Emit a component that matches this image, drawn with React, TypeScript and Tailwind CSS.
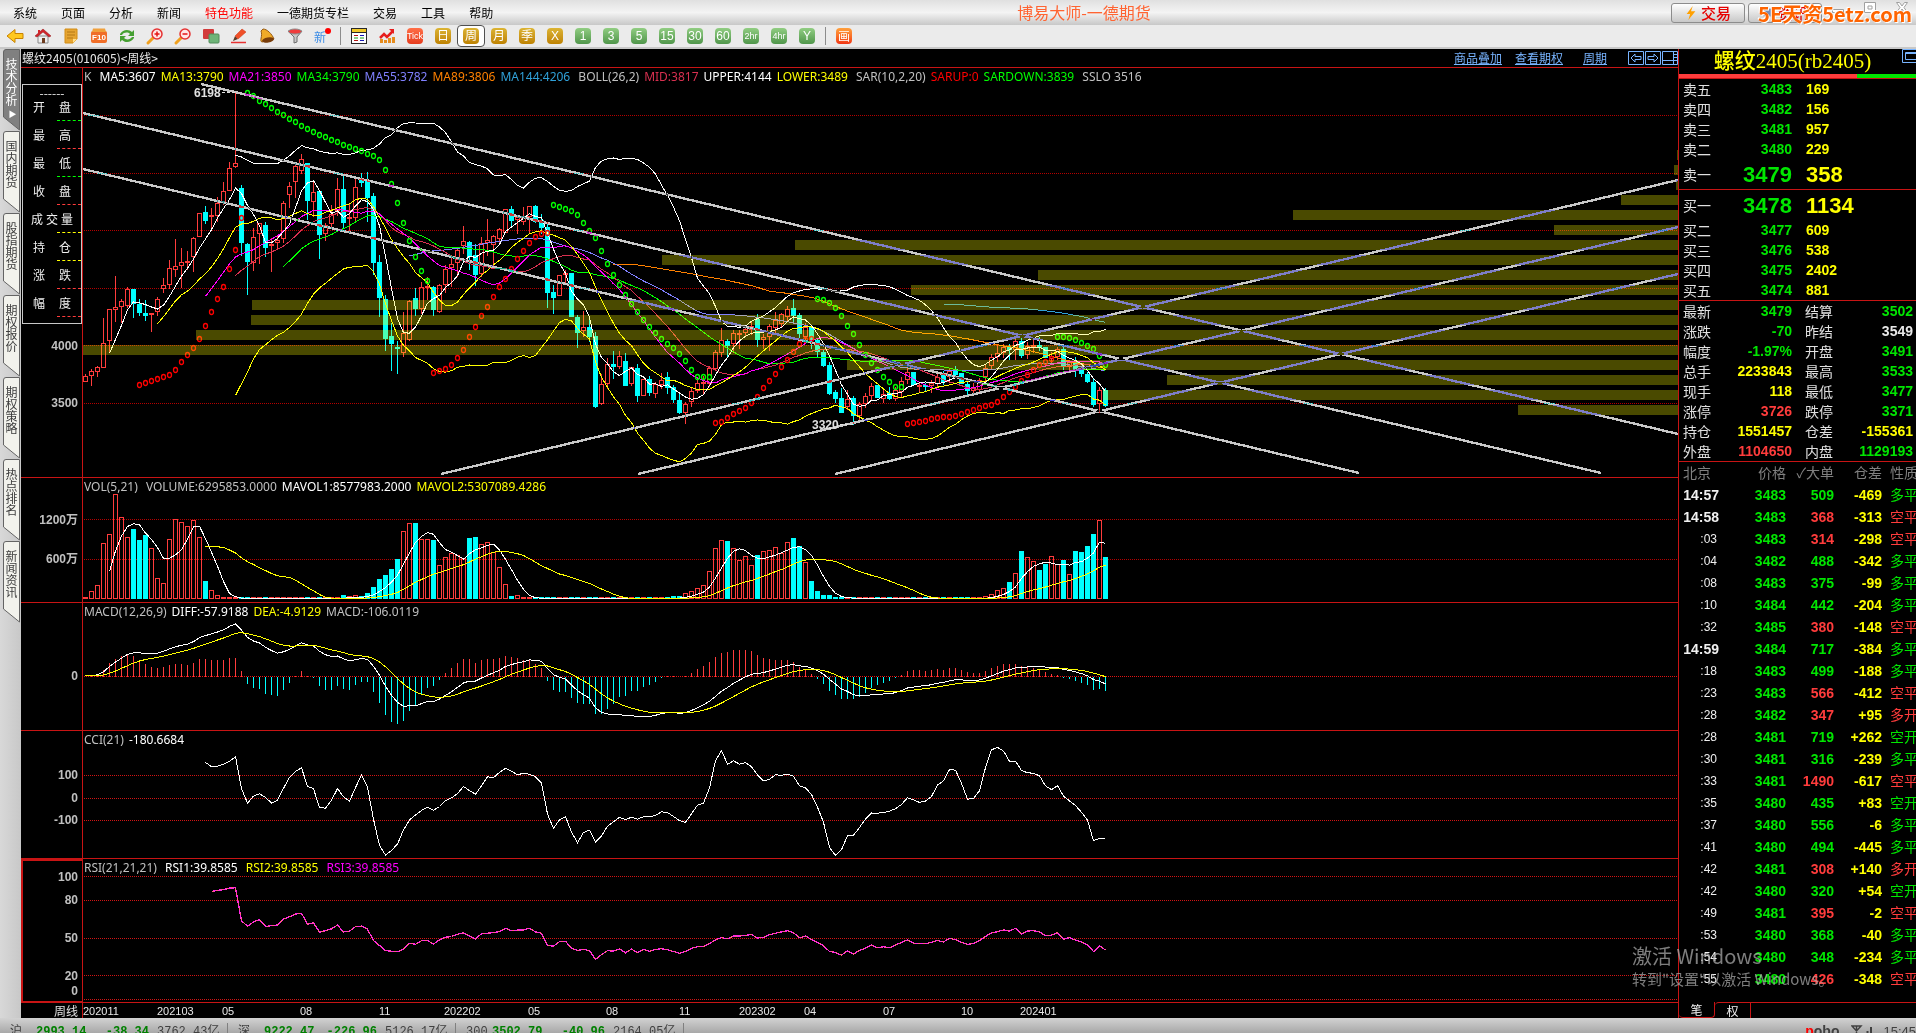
import { ReactNode } from 'react';
import clsx from 'clsx';

// high, body top, body bottom, low, direction (1 = up, 0 = down), in chart units
type Candle = [number, number, number, number, number];

const candles: Candle[] = [
  [374, 376, 382, 382, 1], [369, 371, 376, 386, 1], [366, 367, 372, 377, 1], [318, 343, 368, 368, 1],
  [309, 309, 341, 353, 1], [276, 307, 310, 322, 1], [299, 301, 307, 323, 1], [287, 289, 306, 308, 1],
  [289, 289, 304, 318, 0], [299, 304, 313, 316, 0], [300, 313, 316, 321, 0], [313, 313, 315, 332, 1],
  [297, 299, 312, 316, 1], [278, 285, 289, 293, 1], [260, 268, 285, 289, 1], [239, 266, 270, 277, 1],
  [248, 262, 266, 288, 1], [251, 261, 262, 270, 1], [237, 238, 257, 272, 1], [213, 213, 237, 237, 1],
  [206, 212, 221, 224, 0], [208, 215, 217, 230, 1], [197, 203, 216, 222, 1], [182, 191, 202, 205, 1],
  [162, 168, 191, 191, 1], [93, 163, 167, 168, 1], [185, 188, 243, 256, 0], [243, 244, 262, 295, 0],
  [228, 237, 263, 271, 1], [223, 223, 234, 264, 1], [222, 225, 248, 257, 0], [238, 244, 246, 272, 1],
  [235, 240, 243, 249, 1], [201, 203, 239, 243, 1], [182, 186, 195, 208, 1], [163, 166, 182, 198, 1],
  [154, 159, 171, 174, 1], [163, 163, 201, 220, 0], [180, 192, 202, 217, 1], [191, 191, 235, 259, 0],
  [223, 225, 234, 241, 1], [205, 214, 224, 229, 1], [178, 189, 211, 216, 1], [176, 189, 223, 228, 0],
  [204, 217, 219, 233, 1], [179, 187, 218, 223, 1], [173, 179, 183, 187, 0], [172, 181, 198, 222, 0],
  [193, 196, 263, 275, 0], [255, 262, 298, 317, 0], [295, 299, 339, 351, 0], [323, 336, 344, 371, 0],
  [341, 347, 349, 374, 0], [312, 333, 353, 357, 1], [300, 301, 340, 341, 1], [288, 298, 309, 316, 0],
  [282, 287, 309, 314, 1], [277, 286, 288, 300, 1], [286, 287, 310, 316, 0], [284, 285, 312, 313, 1],
  [265, 269, 285, 293, 1], [255, 264, 268, 287, 1], [247, 250, 263, 277, 1], [226, 241, 246, 254, 1],
  [241, 242, 257, 270, 0], [244, 255, 275, 286, 0], [237, 243, 274, 277, 1], [219, 240, 243, 256, 1],
  [235, 236, 245, 266, 1], [228, 229, 239, 245, 1], [209, 209, 233, 233, 1], [206, 209, 221, 226, 0],
  [215, 217, 220, 234, 1], [207, 216, 222, 225, 1], [206, 206, 217, 233, 1], [205, 206, 222, 223, 0],
  [214, 220, 228, 234, 0], [222, 227, 293, 308, 0], [285, 292, 298, 314, 0], [275, 275, 296, 296, 1],
  [270, 273, 275, 283, 1], [273, 273, 317, 317, 0], [315, 317, 333, 348, 0], [311, 327, 331, 337, 1],
  [317, 327, 337, 342, 0], [332, 336, 407, 408, 0], [374, 384, 404, 405, 1], [358, 364, 384, 389, 1],
  [351, 364, 367, 379, 0], [351, 356, 367, 369, 1], [353, 361, 386, 386, 0], [367, 367, 384, 386, 1],
  [364, 368, 396, 402, 0], [379, 379, 396, 396, 1], [376, 379, 393, 396, 0], [382, 384, 394, 398, 1],
  [373, 380, 385, 389, 1], [372, 377, 388, 394, 0], [385, 387, 400, 403, 0], [393, 400, 413, 414, 0],
  [402, 404, 413, 424, 1], [387, 391, 402, 407, 1], [378, 383, 391, 393, 1], [376, 382, 384, 394, 1],
  [366, 368, 384, 387, 1], [350, 352, 369, 370, 1], [328, 340, 353, 357, 1], [339, 341, 346, 358, 0],
  [330, 333, 344, 353, 1], [330, 333, 335, 349, 1], [325, 329, 333, 337, 1], [322, 326, 330, 335, 1],
  [314, 319, 340, 347, 0], [334, 337, 340, 349, 1], [324, 326, 337, 351, 1], [312, 320, 328, 333, 1],
  [313, 314, 324, 328, 1], [306, 309, 317, 322, 1], [299, 308, 316, 324, 0], [313, 315, 334, 340, 0],
  [323, 327, 337, 343, 1], [325, 327, 340, 349, 0], [339, 340, 352, 357, 0], [350, 352, 366, 367, 0],
  [362, 365, 394, 395, 0], [390, 392, 399, 403, 0], [388, 398, 413, 413, 0], [390, 399, 407, 410, 1],
  [396, 398, 416, 425, 0], [402, 404, 416, 420, 1], [393, 396, 404, 408, 1], [383, 386, 396, 400, 1],
  [385, 385, 398, 398, 0], [390, 394, 399, 403, 1], [387, 393, 399, 400, 0], [387, 390, 399, 401, 1],
  [377, 381, 392, 397, 1], [366, 372, 380, 384, 1], [372, 372, 385, 385, 0], [383, 385, 386, 393, 1],
  [383, 385, 387, 392, 0], [380, 383, 386, 393, 1], [374, 377, 384, 387, 1], [371, 374, 382, 385, 0],
  [368, 371, 377, 383, 1], [366, 369, 375, 378, 0], [373, 373, 384, 384, 0], [382, 384, 391, 395, 0],
  [383, 388, 391, 394, 1], [378, 380, 390, 392, 1], [365, 368, 377, 382, 1], [354, 357, 366, 369, 1],
  [344, 353, 357, 362, 1], [344, 347, 353, 358, 1], [344, 347, 350, 360, 0], [339, 341, 350, 360, 1],
  [338, 341, 356, 358, 0], [342, 346, 355, 359, 1], [340, 345, 347, 353, 1], [337, 345, 348, 351, 0],
  [347, 347, 358, 358, 0], [352, 356, 359, 363, 1], [347, 349, 357, 360, 1], [347, 349, 366, 370, 0],
  [360, 362, 367, 371, 1], [357, 361, 369, 377, 0], [368, 369, 374, 377, 0], [372, 374, 382, 383, 0],
  [379, 382, 405, 407, 0], [387, 390, 404, 413, 1], [388, 390, 406, 407, 0],
];

const volumes: number[] = [
  1, 7, 13, 55, 64, 104, 81, 61, 69, 58, 63, 50, 20, 15, 59, 79, 76, 72, 78, 61, 17, 8, 3, 1,
  ...Array(19).fill(1),
  3, 2, 3, 2, 5, 11, 19, 23, 29, 39, 67, 75, 75, 59, 59, 58, 33, 41, 45, 43, 40, 60, 61, 54, 56, 46, 31, 14, 2, 3, 1,
  ...Array(24).fill(1),
  2, 2, 5, 7, 10, 13, 27, 50, 58, 57, 50, 38, 42, 33, 43, 47, 48, 51, 45, 56, 60, 52, 36, 17, 7, 3, 3,
  ...Array(25).fill(1),
  2, 4, 8, 10, 16, 25, 47, 41, 37, 28, 34, 42, 34, 38, 24, 47, 46, 52, 64, 78, 41,
];

const sar = [
  { start: 9, color: '#ff0000', ys: [385, 383, 381, 379, 377, 375, 370, 362, 355, 348, 339, 326, 312, 299, 287, 269, 250, 218] },
  { start: 27, color: '#00ff00', ys: [93, 96, 101, 104, 108, 112, 115, 119, 122, 126, 129, 132, 135, 137, 140, 142, 145, 147, 149, 151, 154, 156, 160, 170, 184, 203, 223, 241, 257, 271, 281] },
  { start: 58, color: '#ff0000', ys: [373, 371, 369, 365, 358, 350, 337, 327, 316, 307, 297, 287, 279, 269, 259, 251, 243, 237, 234, 233] },
  { start: 78, color: '#00ff00', ys: [205, 207, 209, 211, 215, 223, 231, 238, 251, 264, 275, 285, 295, 304, 312, 320, 327, 333, 339, 344, 348, 354, 361, 370, 377, 377, 377] },
  { start: 105, color: '#ff0000', ys: [423, 422, 418, 414, 411, 408, 403, 397, 388, 381, 374, 367, 360, 352, 344, 340, 339] },
  { start: 122, color: '#00ff00', ys: [299, 300, 303, 308, 316, 326, 334, 345, 355, 363, 370, 377, 382, 387, 387] },
  { start: 137, color: '#ff0000', ys: [424, 423, 422, 421, 419, 418, 417, 417, 416, 414, 412, 410, 408, 406, 405, 402, 397, 392, 387, 381, 375, 370, 365, 362, 359] },
  { start: 162, color: '#00ff00', ys: [337, 337, 338, 340, 343, 346, 349, 356, 365] },
];

// volume profile, one bar each 15 units from y = 150
const profile = [1677, 1674, 1676, 1621, 1293, 1554, 795, 662, 1038, 911, 252, 251, 196, 83, 847, 1167, 1103, 1518];

const trendLines = [
  [201, 84, 1678, 434],
  [83, 113, 1601, 473],
  [83, 169, 1359, 473],
  [441, 474, 1678, 180],
  [638, 474, 1678, 227],
  [835, 474, 1678, 274],
];

const xAt = (i: number) => 85.5 + i * 6;
const closes = candles.map((c) => (c[4] ? c[1] : c[2]));
const prices = closes.map((c) => -c);

const average = (values: number[]) => values.reduce((a, b) => a + b, 0) / values.length;

const rolling = (values: number[], n: number, fn: (w: number[]) => number) =>
  values.map((_, i) => (i < n - 1 ? NaN : fn(values.slice(i - n + 1, i + 1))));

const ema = (values: number[], n: number) => {
  let prev = values[0];
  return values.map((v) => (prev = prev + ((v - prev) * 2) / (n + 1)));
};

const deviation = (w: number[]) => {
  const m = average(w);
  return Math.sqrt(w.reduce((a, b) => a + (b - m) ** 2, 0) / (w.length - 1));
};

const mid = rolling(closes, 26, average);
const dev = rolling(closes, 26, deviation);

const fast = ema(prices, 12);
const slow = ema(prices, 26);
const diff = fast.map((v, i) => v - slow[i]);
const dea = ema(diff, 9);

const cci = rolling(candles.map((c, i) => -(c[0] + c[3] + closes[i]) / 3), 21, (w) => {
  const m = average(w);
  return (w[w.length - 1] - m) / (0.015 * average(w.map((v) => Math.abs(v - m))));
});

const rsi = (() => {
  let gain = 0;
  let move = 0;
  return prices.map((p, i) => {
    if (i === 0) return NaN;
    const d = p - prices[i - 1];
    // the first bar seeds both averages
    gain = i === 1 ? Math.max(d, 0) : (gain * 20 + Math.max(d, 0)) / 21;
    move = i === 1 ? Math.abs(d) : (move * 20 + Math.abs(d)) / 21;
    return i < 21 ? NaN : (gain / move) * 100;
  });
})();

const Curve = ({ values, color, width = 1, dash }: { values: number[]; color: string; width?: number; dash?: string }) => (
  <polyline
    fill="none"
    stroke={color}
    strokeWidth={width}
    strokeDasharray={dash}
    points={values
      .map((v, i) => (Number.isNaN(v) ? '' : `${xAt(i)},${v.toFixed(1)}`))
      .filter(Boolean)
      .join(' ')}
  />
);

const GridLines = ({ ys, color = '#b40000' }: { ys: number[]; color?: string }) => (
  <>
    {ys.map((y) => (
      <line key={y} x1="84" x2="1678" y1={y + 0.5} y2={y + 0.5} stroke={color} strokeDasharray="1 1" />
    ))}
  </>
);

type Label = { y: number; text: string };

type PaneProps = {
  top: number;
  height: number;
  labels: Label[];
  legend: [string, string][];
  active?: boolean;
  aside?: ReactNode;
  children: ReactNode;
};

const Pane = ({ top, height, labels, legend, active, aside, children }: PaneProps) => (
  <section className="grid min-h-0 grid-cols-[62px_minmax(0,1fr)] border-b border-[#c81414]">
    <div className={clsx('relative min-h-0 border-r border-[#c81414]', active && 'border-2 border-b')}>
      <svg
        viewBox={`21 ${top} 61 ${height}`}
        preserveAspectRatio="none"
        className={clsx('absolute w-[61px]', active ? '-top-[2px] -left-[2px] h-[calc(100%+3px)]' : 'top-0 left-0 h-full')}
      >
        {labels.map((l) => (
          <text key={l.text} x="78" y={l.y + 4} textAnchor="end" fill="#c0c0c0" className="font-['Liberation_Sans','Noto_Sans_CJK_SC',sans-serif] text-[12px] font-bold">
            {l.text}
          </text>
        ))}
      </svg>
      {aside}
    </div>
    <div className="relative min-h-0 overflow-hidden">
      <svg viewBox={`83 ${top} 1595 ${height}`} preserveAspectRatio="none" shapeRendering="crispEdges" className="absolute inset-0 h-full w-full">
        {children}
      </svg>
      <div className="absolute top-px left-px flex gap-[5px] font-['Noto_Sans',sans-serif] text-[12px] leading-4 whitespace-pre">
        {legend.map(([text, color]) => (
          <span key={text} style={{ color }}>{text}</span>
        ))}
      </div>
    </div>
  </section>
);

const quoteFields = [
  ['开盘', 'text-[#00ff00]'],
  ['最高', 'text-[#ff3c3c]'],
  ['最低', 'text-[#00ff00]'],
  ['收盘', 'text-[#ff3c3c]'],
  ['成交量', 'text-[#ffff00]'],
  ['持仓', 'text-[#ffff00]'],
  ['涨跌', 'text-[#ff3c3c]'],
  ['幅度', 'text-[#ff3c3c]'],
];

const CursorBox = () => (
  <div className="absolute top-4 left-px w-[60px] border border-[#c8c8c8] bg-black text-[12px] text-[#f0f0f0]">
    <div className="h-[14px] text-center leading-4">------</div>
    {quoteFields.map(([name, color]) => (
      <div key={name} className="h-7">
        <div className={clsx('flex h-4 justify-between leading-4', name.length > 2 ? 'px-2' : 'px-[10px]')}>
          {name.split('').map((c) => <span key={c}>{c}</span>)}
        </div>
        <div className={clsx('ml-auto mt-[5px] w-6 border-t border-dashed border-current', color)} />
      </div>
    ))}
  </div>
);

const PricePane = () => (
  <Pane
    top={68}
    height={409}
    labels={[{ y: 346, text: '4000' }, { y: 403, text: '3500' }]}
    legend={[
      ['K ', '#c0c0c0'], ['MA5:3607', '#ffffff'], ['MA13:3790', '#ffff00'], ['MA21:3850', '#ff00ff'],
      ['MA34:3790', '#00ff00'], ['MA55:3782', '#8080ff'], ['MA89:3806', '#ff8000'], ['MA144:4206 ', '#30a0d8'],
      ['BOLL(26,2)', '#c0c0c0'], ['MID:3817', '#d83050'], ['UPPER:4144', '#ffffff'], ['LOWER:3489 ', '#ffff00'],
      ['SAR(10,2,20)', '#c0c0c0'], ['SARUP:0', '#ff0000'], ['SARDOWN:3839 ', '#00ff00'], ['SSLO 3516', '#c0c0c0'],
    ]}
    aside={<CursorBox />}
  >
    <GridLines ys={[115, 173, 230, 288, 345, 403]} />
    {candles.map(([high, top, bottom, low, up], i) => {
      const x = xAt(i);
      return up ? (
        <g key={i} stroke="#ff3c3c" fill="none">
          <path d={`M${x} ${high}V${top}M${x} ${bottom}V${low}`} />
          <rect x={x - 2} y={top + 0.5} width="4" height={Math.max(bottom - top - 1, 1)} />
        </g>
      ) : (
        <g key={i}>
          <line x1={x} x2={x} y1={high} y2={low} stroke="#00ffff" />
          <rect x={x - 2.5} y={top} width="5" height={bottom - top} fill="#00ffff" />
        </g>
      );
    })}
    <Curve values={rolling(closes, 144, average)} color="#30a0d8" />
    <Curve values={rolling(closes, 89, average)} color="#ff8000" />
    <Curve values={rolling(closes, 55, average)} color="#8080ff" />
    <Curve values={rolling(closes, 34, average)} color="#00ff00" />
    <Curve values={mid} color="#d83050" />
    <Curve values={rolling(closes, 21, average)} color="#ff00ff" />
    <Curve values={rolling(closes, 13, average)} color="#ffff00" />
    <Curve values={rolling(closes, 5, average)} color="#ffffff" />
    <Curve values={mid.map((m, i) => m - 2 * dev[i])} color="#ffffff" />
    <Curve values={mid.map((m, i) => m + 2 * dev[i])} color="#ffff00" />
    {sar.map((run) =>
      run.ys.map((y, i) => (
        <ellipse key={`${run.start}-${i}`} cx={xAt(run.start + i)} cy={y} rx="2" ry="2.5" fill="none" stroke={run.color} strokeWidth="1.3" shapeRendering="auto" />
      )),
    )}
    {profile.map((x, i) => (
      <rect key={i} x={x} y={150 + i * 15} width={1678 - x} height="10" fill="#ffff00" fillOpacity="0.29" />
    ))}
    {trendLines.map(([x1, y1, x2, y2]) => (
      <line key={x1 + y1} x1={x1} y1={y1} x2={x2} y2={y2} stroke="#c8c8c8" strokeWidth="2.4" className="mix-blend-difference" />
    ))}
    <text x="194" y="97" fill="#e0e0e0" className="font-['Liberation_Sans',sans-serif] text-[12px] font-bold">6198</text>
    <path d="M222 92.5H235" stroke="#e0e0e0" strokeDasharray="3 2" />
    <text x="812" y="429" fill="#e0e0e0" className="font-['Liberation_Sans',sans-serif] text-[12px] font-bold">3320</text>
    <path d="M840 424.5H853" stroke="#e0e0e0" strokeDasharray="3 2" />
  </Pane>
);

const VolumePane = () => (
  <Pane
    top={478}
    height={124}
    labels={[{ y: 520, text: '1200万' }, { y: 559, text: '600万' }]}
    legend={[['VOL(5,21) ', '#c0c0c0'], ['VOLUME:6295853.0000', '#c0c0c0'], ['MAVOL1:8577983.2000', '#ffffff'], ['MAVOL2:5307089.4286', '#ffff00']]}
  >
    <GridLines ys={[519, 559]} />
    {volumes.map((v, i) =>
      candles[i][4] ? (
        <rect key={i} x={xAt(i) - 2} y={598.5 - v} width="4" height={v} fill="none" stroke="#ff3c3c" />
      ) : (
        <rect key={i} x={xAt(i) - 2.5} y={598 - v} width="5" height={v + 1} fill="#00ffff" />
      ),
    )}
    <Curve values={rolling(volumes, 5, average).map((v) => 599.5 - v)} color="#ffffff" />
    <Curve values={rolling(volumes, 21, average).map((v) => 599.5 - v)} color="#ffff00" />
  </Pane>
);

const MacdPane = () => (
  <Pane
    top={603}
    height={127}
    labels={[{ y: 676, text: '0' }]}
    legend={[['MACD(12,26,9)', '#c0c0c0'], ['DIFF:-57.9188', '#ffffff'], ['DEA:-4.9129', '#ffff00'], ['MACD:-106.0119', '#c0c0c0']]}
  >
    <GridLines ys={[676]} color="#e01414" />
    {diff.map((d, i) => {
      const bar = (d - dea[i]) * 2.4;
      return <line key={i} x1={xAt(i)} x2={xAt(i)} y1="676.5" y2={676.5 - bar} stroke={bar > 0 ? '#ff3c3c' : '#00ffff'} />;
    })}
    <Curve values={diff.map((v) => 676 - v * 1.2)} color="#ffffff" />
    <Curve values={dea.map((v) => 676 - v * 1.2)} color="#ffff00" />
  </Pane>
);

const CciPane = () => (
  <Pane
    top={731}
    height={127}
    labels={[{ y: 775, text: '100' }, { y: 798, text: '0' }, { y: 820, text: '-100' }]}
    legend={[['CCI(21)', '#c0c0c0'], ['-180.6684', '#ffffff']]}
  >
    <GridLines ys={[775, 798, 820]} color="#d21414" />
    <Curve values={cci.map((v) => 798 - v * 0.225)} color="#ffffff" />
  </Pane>
);

const RsiPane = () => (
  <Pane
    active
    top={859}
    height={143}
    labels={[{ y: 877, text: '100' }, { y: 900, text: '80' }, { y: 938, text: '50' }, { y: 976, text: '20' }, { y: 991, text: '0' }]}
    legend={[['RSI(21,21,21) ', '#c0c0c0'], ['RSI1:39.8585 ', '#ffffff'], ['RSI2:39.8585 ', '#ffff00'], ['RSI3:39.8585', '#ff00ff']]}
  >
    <GridLines ys={[876, 900, 938, 975, 999]} color="#d21414" />
    <Curve values={rsi.map((v) => 999.5 - v * 1.23)} color="#ff28e0" width={1.3} />
    <Curve values={rsi.map((v) => 999.5 - v * 1.23)} color="#ff6478" dash="2 3" />
  </Pane>
);

const dates: [number, string][] = [
  [83, '202011'], [157, '202103'], [222, '05'], [300, '08'], [379, '11'], [444, '202202'], [528, '05'],
  [606, '08'], [679, '11'], [739, '202302'], [804, '04'], [883, '07'], [961, '10'], [1020, '202401'],
];

const DateAxis = () => (
  <div className="grid h-[15px] shrink-0 grid-cols-[62px_minmax(0,1fr)]">
    <div className="border-r border-[#c81414] pr-1 text-right text-[12px] leading-[15px] text-[#e0e0e0]">周线</div>
    <svg viewBox="83 0 1595 15" preserveAspectRatio="none" className="h-full w-full">
      {dates.map(([x, text]) => (
        <text key={x} x={x} y="12" fill="#e8e8e8" className="font-['Liberation_Sans',sans-serif] text-[11px]">{text}</text>
      ))}
    </svg>
  </div>
);

const toolIcons: { name: string; art: ReactNode }[] = [
  { name: '后退', art: <path d="M0 8 8 1.500v4h8v5H8v4z" fill="#ffc81e" stroke="#c88200" /> },
  {
    name: '首页',
    art: (
      <>
        <path d="M3 8h10v7H3z" fill="#f0f0f0" stroke="#888" />
        <path d="M0 8 8 1l8 7-2 1-6-5-6 5z" fill="#d2232a" stroke="#8c1414" strokeWidth=".5" />
        <path d="M3 2h2v3H3z" fill="#d2232a" />
        <path d="M7 10h3v5H7z" fill="#6e3c1e" />
      </>
    ),
  },
  {
    name: '公告',
    art: (
      <>
        <path d="M2 1h12v10l-4 4H2z" fill="#e6a532" stroke="#d28c14" />
        <path d="M4 4h8M4 7h8M4 10h6" stroke="#b47814" />
        <path d="m14 11-4 4v-4z" fill="#ffe08c" />
      </>
    ),
  },
  {
    name: 'F10',
    art: (
      <>
        <rect x="0" y="3" width="16" height="12" rx="2" fill="#f06e28" />
        <path d="M1 4 2 .5h12L15 4z" fill="#f0a03c" />
        <text x="8" y="12" textAnchor="middle" fill="#fff" className="font-['Liberation_Sans',sans-serif] text-[8px] font-bold">F10</text>
      </>
    ),
  },
  {
    name: '刷新',
    art: (
      <g fill="#46a032">
        <path d="M1 6c3-5 9-5 12-2l2-2v6H9l2-2C9 4 5 4 3 7H1z" />
        <path d="M15 10c-3 5-9 5-12 2l-2 2V8h6l-2 2c2 2 6 2 8-1h2z" />
      </g>
    ),
  },
  {
    name: '放大',
    art: (
      <>
        <path d="m1 15 6-6" stroke="#f0a01e" strokeWidth="3" strokeLinecap="round" />
        <circle cx="10" cy="6" r="5" fill="#ffe6e6" stroke="#e63232" strokeWidth="1.500" />
        <path d="M7.500 6h5M10 3.500v5" stroke="#e61414" strokeWidth="1.500" />
      </>
    ),
  },
  {
    name: '缩小',
    art: (
      <>
        <path d="m1 15 6-6" stroke="#f0a01e" strokeWidth="3" strokeLinecap="round" />
        <circle cx="10" cy="6" r="5" fill="#ffe6e6" stroke="#e63232" strokeWidth="1.500" />
        <path d="M7.500 6h5" stroke="#e61414" strokeWidth="1.500" />
      </>
    ),
  },
  {
    name: '叠加',
    art: (
      <>
        <rect x="0" y="1" width="11" height="10" rx="1" fill="#d23c3c" />
        <rect x="6" y="6" width="10" height="9" rx="1" fill="#6eb478" stroke="#508c5a" />
      </>
    ),
  },
  {
    name: '画线',
    art: (
      <>
        <path d="M0 14.500h15" stroke="#e63232" strokeWidth="1.500" />
        <path d="M2 13 4 8l3 3z" fill="#5a3c28" />
        <path d="m4 8 7-7 4 3-8 7z" fill="#f05028" stroke="#c83214" strokeWidth=".5" />
      </>
    ),
  },
  {
    name: '预警',
    art: (
      <>
        <path d="M4 1c4 0 9 5 11 10l-12 3C0 13 4 8 2 3z" fill="#f0aa28" stroke="#965a14" />
        <ellipse cx="9" cy="12" rx="6" ry="2.500" fill="#783c0a" transform="rotate(-10 9 12)" />
      </>
    ),
  },
  {
    name: '筛选',
    art: (
      <>
        <path d="M1 3h14l-5 6v5l-3 1V9z" fill="#c8c8c8" stroke="#6e6e6e" />
        <ellipse cx="8" cy="3.500" rx="6.500" ry="2.500" fill="#f03c3c" stroke="#8c8c8c" />
      </>
    ),
  },
  {
    name: '新',
    art: (
      <>
        <text x="-1" y="14" fill="#3c8ce6" className="font-['Noto_Sans_CJK_SC',sans-serif] text-[12px]">新</text>
        <circle cx="13" cy="3" r="3" fill="#ff0000" />
      </>
    ),
  },
];

const viewIcons: { name: string; art: ReactNode }[] = [
  {
    name: '报价',
    art: (
      <>
        <rect x=".5" y=".5" width="15" height="15" fill="#fff" stroke="#282828" />
        <path d="M1 1h14v3H1z" fill="#f0c828" />
        <path d="M1 4.500h14" stroke="#282828" />
        <path d="M3 7.500h4M3 12.500h4" stroke="#b41414" />
        <path d="M9 7.500h4M9 12.500h4" stroke="#1414b4" />
        <path d="M3 10h4M9 10h4" stroke="#14a014" />
      </>
    ),
  },
  {
    name: '走势',
    art: (
      <>
        <path d="M1 15v-4h3v4zM5 15v-3h3v3zM9 15v-5h3v5zM13 15V9h3v6z" fill="#e68c1e" />
        <path d="m1 10 4-4 3 3 6-6" fill="none" stroke="#e61e1e" strokeWidth="2.500" />
        <path d="M10 1h5v5z" fill="#e61e1e" />
      </>
    ),
  },
];

const periods = [
  { text: 'Tick', color: 'bg-linear-to-b from-[#ff6e46] to-[#e63c1e]' },
  { text: '日', color: 'bg-linear-to-b from-[#dcb432] to-[#be8200]' },
  { text: '周', color: 'bg-linear-to-b from-[#dcb432] to-[#be8200]', selected: true },
  { text: '月', color: 'bg-linear-to-b from-[#dcb432] to-[#be8200]' },
  { text: '季', color: 'bg-linear-to-b from-[#dcb432] to-[#be8200]' },
  { text: 'X', color: 'bg-linear-to-b from-[#dcb432] to-[#be8200]' },
  ...['1', '3', '5', '15', '30', '60', '2hr', '4hr', 'Y'].map((text) => ({
    text,
    color: 'bg-linear-to-b from-[#91cd82] to-[#50964b]',
    selected: false,
  })),
];

const Tool = ({ name, children, selected }: { name: string; children: ReactNode; selected?: boolean }) => (
  <button
    aria-label={name}
    className={clsx('flex h-[22px] w-7 items-center justify-center', selected && 'rounded border border-[#505050] bg-white')}
  >
    {children}
  </button>
);

const Toolbar = () => (
  <div className="flex h-6 shrink-0 items-center border-b-2 border-[#c8c8c8] bg-[#ebebeb] pl-px">
    {toolIcons.map((t) => (
      <Tool key={t.name} name={t.name}>
        <svg viewBox="0 0 16 16" className="h-4 w-4 overflow-visible">{t.art}</svg>
      </Tool>
    ))}
    <div className="mr-1 ml-[3px] h-[18px] w-px bg-[#8c8c8c]" />
    {viewIcons.map((t) => (
      <Tool key={t.name} name={t.name}>
        <svg viewBox="0 0 16 16" className="h-4 w-4">{t.art}</svg>
      </Tool>
    ))}
    {periods.map((p) => (
      <Tool key={p.text} name={p.text} selected={p.selected}>
        <span className={clsx("flex h-4 w-4 items-center justify-center rounded-sm font-['Liberation_Sans','Noto_Sans_CJK_SC',sans-serif] leading-4 text-white", p.color, p.text.length > 2 ? 'text-[9px]' : 'text-[12px]')}>
          {p.text}
        </span>
      </Tool>
    ))}
    <div className="mr-1 ml-1 h-[18px] w-px bg-[#8c8c8c]" />
    <Tool name="画">
      <span className="flex h-4 w-4 items-center justify-center rounded-sm bg-linear-to-b from-[#ffa03c] to-[#f03214] text-[12px] leading-4 text-white">画</span>
    </Tool>
  </div>
);

const menus = ['系统', '页面', '分析', '新闻', '特色功能', '一德期货专栏', '交易', '工具', '帮助'];

const TitleBar = () => (
  <header className="relative flex h-[25px] shrink-0 bg-linear-to-b from-[#e0e0e0] via-[#f4f4f4] to-[#c8c8c8]">
    <nav className="flex items-center gap-6 pl-[13px] text-[12px] text-black">
      {menus.map((m) => (
        <button key={m} className={clsx(m === '特色功能' && 'text-[#ff0000]')}>{m}</button>
      ))}
    </nav>
    <h1 className="flex-1 pl-1 text-center text-[16px] leading-6 text-[#ff6432]">博易大师-一德期货</h1>
    <div className="flex w-[245px] items-center gap-[3px]">
      <button className="flex h-5 w-[74px] items-center justify-center gap-1 rounded-[3px] border border-[#8c8c8c] bg-linear-to-b from-white to-[#c8c8c8] text-[15px] leading-4 font-medium text-[#e60000]">
        <svg viewBox="0 0 12 16" className="h-[14px] w-3">
          <path d="M8 0 1 9h4l-2 7 8-10H6z" fill="#ffa000" />
        </svg>
        交易
      </button>
      <button className="flex h-5 w-[74px] items-center justify-center gap-1 rounded-[3px] border border-[#8c8c8c] bg-linear-to-b from-white to-[#c8c8c8] text-[15px] leading-4 font-medium text-[#e60000]">
        <svg viewBox="0 0 12 16" className="h-[14px] w-3">
          <path d="M1 3h10v9H1z" fill="#788cb4" />
        </svg>
        资讯
      </button>
      <div className="ml-auto flex gap-5 self-start pt-[2px] pr-2 text-[#a0a0a0]">
        <svg viewBox="0 0 12 12" className="h-3 w-3" fill="#fff" stroke="currentColor"><path d="M.5 7.500h11v3H.5z" /></svg>
        <svg viewBox="0 0 12 12" className="h-3 w-3" fill="#fff" stroke="currentColor"><path d="M.5.5h11v10H.5zM4 4h4v3H4z" /></svg>
        <svg viewBox="0 0 12 12" className="h-3 w-3" fill="#fff" stroke="currentColor"><path d="M.5.5h3L6 4 8.500.5h3L8 5.500l3.500 5h-3L6 7l-2.500 3.500h-3l3.500-5z" /></svg>
      </div>
    </div>
    <div className="absolute top-0 right-1 text-[20px] leading-7 font-bold text-[#ff6400] [text-shadow:1px_1px_0_#fff,-1px_-1px_0_#fff]">
      5E天资5etz.com
    </div>
  </header>
);

const sideTabs = ['技术分析', '国内期货', '股指期货', '期权报价', '期权策略', '热点排名', '新闻资讯'];

const SideTabs = () => (
  <aside className="flex w-[21px] shrink-0 flex-col bg-linear-to-r from-[#d8d8d8] to-[#c8c8c8] pl-[3px]">
    {sideTabs.map((tab, i) => (
      <button key={tab} className="relative h-[82px] w-[17px] text-center">
        <svg viewBox="0 0 17 82" className="absolute inset-0 h-full w-full">
          <path d="M16.500.5H3Q.5.5.500 3V68l16 13z" fill={i === 0 ? '#808080' : '#f2f2ec'} stroke="#646464" />
        </svg>
        <span className={clsx('relative mx-auto -mt-4 block w-3 text-[12px] leading-[12px] break-all', i === 0 ? 'text-white' : 'text-[#3c3c3c]')}>
          {tab}
          {i === 0 && <span className="absolute top-[50px] left-[3px] text-[8px]">▶</span>}
        </span>
      </button>
    ))}
  </aside>
);

const ChartHeader = () => (
  <div className="flex h-[19px] shrink-0 items-center border-b border-[#c81414] pl-px text-[12px] text-[#e8e8e8]">
    <h2 className="flex-1">螺纹2405(010605)&lt;周线&gt;</h2>
    <div className="flex items-center text-[#78b4ff] underline">
      <a href="#overlay" className="mr-[13px]">商品叠加</a>
      <a href="#option" className="mr-5">查看期权</a>
      <a href="#period" className="mr-[21px]">周期</a>
    </div>
    <div className="flex gap-px text-[#78b4ff]">
      <svg viewBox="0 0 16 14" className="h-[14px] w-4" fill="none" stroke="currentColor"><path d="M.5.5h15v13H.5zM3 7l4-4v2.500h6v3H7V11z" /></svg>
      <svg viewBox="0 0 16 14" className="h-[14px] w-4" fill="none" stroke="currentColor"><path d="M.5.5h15v13H.5zM13 7 9 3v2.500H3v3h6V11z" /></svg>
      <svg viewBox="0 0 16 14" className="h-[14px] w-4" fill="none" stroke="currentColor"><path d="M.5.5h15v13H.5zM.5 9.500H11M11.500.5v13M12 3.500h3M12 6.500h3M12 9.500h3" /></svg>
    </div>
  </div>
);

const Level = ({ label, price, size, best }: { label: string; price: string; size: string; best?: boolean }) => (
  <div className={clsx('flex items-center pl-1 text-[14px]', best ? 'h-[30px]' : 'h-5')}>
    <span className="w-8 text-[#e0e0e0]">{label}</span>
    <span className={clsx("w-[77px] text-right font-['Liberation_Sans',sans-serif] font-bold text-[#00e600]", best && 'text-[22px]')}>{price}</span>
    <span className={clsx("pl-[14px] font-['Liberation_Sans',sans-serif] font-bold text-[#ffff00]", best && 'text-[22px]')}>{size}</span>
  </div>
);

const asks = [['卖五', '3483', '169'], ['卖四', '3482', '156'], ['卖三', '3481', '957'], ['卖二', '3480', '229'], ['卖一', '3479', '358']];
const bids = [['买一', '3478', '1134'], ['买二', '3477', '609'], ['买三', '3476', '538'], ['买四', '3475', '2402'], ['买五', '3474', '881']];

const G = 'text-[#00e600]';
const R = 'text-[#ff3c3c]';
const Y = 'text-[#ffff00]';
const W = 'text-[#e8e8e8]';

const summary = [
  ['最新', '3479', G, '结算', '3502', G],
  ['涨跌', '-70', G, '昨结', '3549', W],
  ['幅度', '-1.97%', G, '开盘', '3491', G],
  ['总手', '2233843', Y, '最高', '3533', G],
  ['现手', '118', Y, '最低', '3477', G],
  ['涨停', '3726', R, '跌停', '3371', G],
  ['持仓', '1551457', Y, '仓差', '-155361', Y],
  ['外盘', '1104650', R, '内盘', '1129193', G],
];

// time, price, size, open interest change, kind
const ticks: [string, number, number, string, string][] = [
  ['14:57', 3483, 509, '-469', '多平'],
  ['14:58', 3483, 368, '-313', '空平'],
  [':03', 3483, 314, '-298', '空平'],
  [':04', 3482, 488, '-342', '多平'],
  [':08', 3483, 375, '-99', '多平'],
  [':10', 3484, 442, '-204', '多平'],
  [':32', 3485, 380, '-148', '空平'],
  ['14:59', 3484, 717, '-384', '多平'],
  [':18', 3483, 499, '-188', '多平'],
  [':23', 3483, 566, '-412', '空平'],
  [':28', 3482, 347, '+95', '多开'],
  [':28', 3481, 719, '+262', '空开'],
  [':30', 3481, 316, '-239', '多平'],
  [':33', 3481, 1490, '-617', '空平'],
  [':35', 3480, 435, '+83', '空开'],
  [':37', 3480, 556, '-6', '多平'],
  [':41', 3480, 494, '-445', '多平'],
  [':42', 3481, 308, '+140', '多开'],
  [':42', 3480, 320, '+54', '空开'],
  [':49', 3481, 395, '-2', '空平'],
  [':53', 3480, 368, '-40', '多平'],
  [':54', 3480, 348, '-234', '多平'],
  [':55', 3480, 426, '-348', '空平'],
];

const QuotePanel = () => (
  <aside className="flex w-[238px] shrink-0 flex-col overflow-hidden border-l border-[#c81414]">
    <div className="flex h-[25px] shrink-0 items-center">
      <h2 className="flex-1 pr-[10px] text-center font-['Liberation_Serif','Noto_Sans_CJK_SC',serif] text-[21px] leading-[25px] font-medium text-[#ffff00]">
        螺纹2405(rb2405)
      </h2>
      <svg viewBox="0 0 14 14" className="-ml-[14px] h-[14px] w-[14px] self-start text-[#78b4ff]" fill="none" stroke="currentColor">
        <path d="M14 .5H.5v13H14M14 3.500H3.500v7H14M4 4.500h10" />
      </svg>
    </div>
    <div className="flex h-[5px] shrink-0 border-b border-[#c81414]">
      <div className="w-3/4 bg-[#ff3c3c]" />
      <div className="flex-1 bg-[#00e600]" />
    </div>
    <div className="border-b border-[#c81414]">
      {asks.map(([label, price, size], i) => <Level key={label} label={label} price={price} size={size} best={i === 4} />)}
    </div>
    <div className="border-b border-[#c81414]">
      {bids.map(([label, price, size], i) => <Level key={label} label={label} price={price} size={size} best={i === 0} />)}
    </div>
    <dl className="border-b border-[#c81414]">
      {summary.map(([a, av, ac, b, bv, bc]) => (
        <div key={a} className="flex h-5 items-center pr-[3px] pl-1 text-[14px]">
          <dt className="w-8 text-[#e0e0e0]">{a}</dt>
          <dd className={clsx("w-[77px] text-right font-['Liberation_Sans',sans-serif] font-bold", ac)}>{av}</dd>
          <dt className="w-[42px] pl-[13px] whitespace-nowrap text-[#e0e0e0]">{b}</dt>
          <dd className={clsx("flex-1 text-right font-['Liberation_Sans',sans-serif] font-bold", bc)}>{bv}</dd>
        </div>
      ))}
    </dl>
    <table className="w-full table-fixed font-['Liberation_Sans','Noto_Sans_CJK_SC',sans-serif] text-[14px] leading-5 whitespace-nowrap">
      <colgroup>
        <col className="w-10" />
        <col className="w-[67px]" />
        <col className="w-12" />
        <col className="w-12" />
        <col />
      </colgroup>
      <thead>
        <tr className="h-[22px] text-right text-[#808080]">
          <th className="pl-1 text-left font-normal">北京</th>
          <th className="font-normal">价格</th>
          <th className="font-normal">✓大单</th>
          <th className="font-normal">仓差</th>
          <th className="pl-2 text-left font-normal">性质</th>
        </tr>
      </thead>
      <tbody>
        {ticks.map(([time, price, size, change, kind], i) => {
          // the size is coloured by the active side, the kind follows it
          const buy = kind === '空平' || kind === '多开';
          return (
            <tr key={i} className="h-[22px] text-right font-bold">
              <td className={clsx('text-[#f0f0f0]', time.length < 5 && 'pr-[2px] text-[12px] font-normal')}>{time}</td>
              <td className={G}>{price}</td>
              <td className={buy ? R : G}>{size}</td>
              <td className={Y}>{change}</td>
              <td className={clsx('pl-2 text-left font-normal', buy ? R : G)}>{kind}</td>
            </tr>
          );
        })}
      </tbody>
    </table>
    <div className="mt-auto flex h-4 shrink-0 text-[12px] leading-[15px] text-[#f0f0f0]">
      <button className="w-9 rounded-b border-r border-b border-[#c81414]">笔</button>
      <button className="w-9 rounded-tl border-t border-r border-[#c81414]">权</button>
      <div className="flex-1 border-t border-[#c81414]" />
    </div>
  </aside>
);

const indexes = [
  { name: '沪', value: '2993.14', change: '-38.34', amount: '3762.43亿' },
  { name: '深', value: '9222.47', change: '-226.96', amount: '5126.17亿' },
  { name: '300', value: '3502.79', change: '-40.96', amount: '2164.05亿' },
];

const StatusBar = () => (
  <footer className="h-[15px] shrink-0 overflow-hidden bg-linear-to-b from-[#d2d2d2] to-[#a8a8a8]">
    <div className="flex h-[27px] items-center font-['Liberation_Mono','Noto_Sans_CJK_SC',monospace] text-[12px] text-[#404040]">
      {indexes.map((x) => (
        <div key={x.name} className="flex w-[228px] items-center border-r border-[#808080] pl-[10px]">
          <span className="w-[26px]">{x.name}</span>
          <span className="w-[51px] font-bold text-[#008000]">{x.value}</span>
          <span className="mr-2 w-[62px] text-right font-bold text-[#008000]">{x.change}</span>
          <span>{x.amount}</span>
        </div>
      ))}
      <div className="ml-auto flex items-center">
        <b className="font-['Liberation_Sans',sans-serif] text-[14px]"><span className="text-[#ff0000]">p</span>obo</b>
        <svg viewBox="0 0 22 14" className="mr-[10px] ml-3 h-[14px] w-[22px]" fill="none" stroke="#404040" strokeWidth="1.500">
          <path d="M1 1h9L5.500 6zM5.500 1v13" />
          <path d="M13 14v-4M16.500 14V6M20 14V2" strokeWidth="2" />
        </svg>
        <time className="font-['Liberation_Sans',sans-serif] text-[13px]">15:45</time>
      </div>
    </div>
  </footer>
);

const App = () => {
  return (
    <div className="relative flex h-screen flex-col overflow-hidden bg-black font-['Noto_Sans_CJK_SC',sans-serif]">
      <TitleBar />
      <Toolbar />
      <main className="flex min-h-0 flex-1">
        <SideTabs />
        <div className="flex min-w-0 flex-1 flex-col">
          <ChartHeader />
          <div className="grid min-h-0 flex-1 grid-rows-[410fr_125fr_128fr_128fr_144fr]">
            <PricePane />
            <VolumePane />
            <MacdPane />
            <CciPane />
            <RsiPane />
          </div>
          <DateAxis />
        </div>
        <QuotePanel />
      </main>
      <StatusBar />

      {/* system activation notice, floats over everything */}
      <div className="pointer-events-none absolute right-[88px] bottom-[43px] w-[196px] whitespace-nowrap text-[#b4b4b4]/70">
        <div className="text-[20px] leading-6">激活 Windows</div>
        <div className="text-[15px] leading-[22px]">转到"设置"以激活 Windows。</div>
      </div>
    </div>
  );
};

export default App;
